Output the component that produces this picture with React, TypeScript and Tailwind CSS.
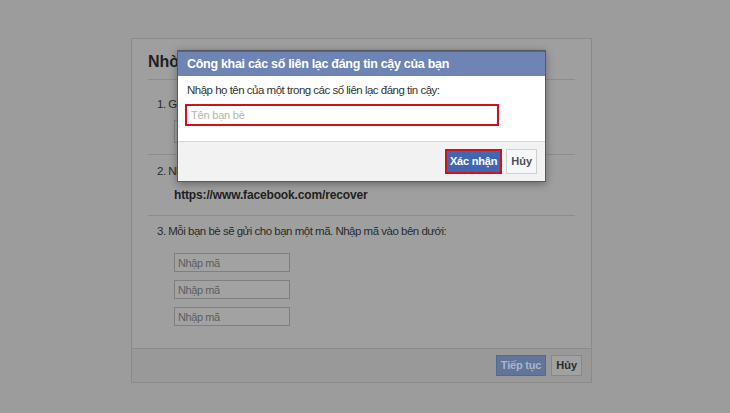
export default function App() {
  const codes = ["Nhập mã", "Nhập mã", "Nhập mã"];

  return (
    <div className="relative w-[730px] h-[413px] overflow-hidden bg-[#9c9c9c] pt-[38px] pl-[131px] font-['Liberation_Sans',Arial,sans-serif] text-[#2b2b2b]">
      {/* dimmed page card */}
      <div className="w-[461px] h-[345px] bg-[#9f9f9f] border border-[#8a8a8a] flex flex-col">
        <div className="flex-1 px-[16px]">
          <div className="h-[41px] flex items-center pt-[6px] border-b border-[#8c8c8c] text-[16px] font-bold text-[#1f1f1f]">
            Nhờ bạn bè giúp đỡ
          </div>
          <div className="h-[75px] border-b border-[#8c8c8c] pl-[9px] pt-[16px] text-[11.5px] tracking-[-0.5px]">
            <p>1. Gửi liên kết cho bạn bè của bạn</p>
            <div className="mt-[7px] ml-[17px] w-[150px] h-[23px] border border-[#858585] bg-[#a3a3a3]" />
          </div>
          <div className="h-[61px] border-b border-[#8c8c8c] pl-[9px] pt-[8px] text-[11.5px] tracking-[-0.5px]">
            <p>2. Nhờ họ truy cập vào liên kết sau:</p>
            <p className="mt-[6px] ml-[17px] text-[12px] tracking-[-0.15px] font-bold text-[#222]">https://www.facebook.com/recover</p>
          </div>
          <div className="pl-[9px] pt-[7px] text-[11.5px] tracking-[-0.5px]">
            <p>3. Mỗi bạn bè sẽ gửi cho bạn một mã. Nhập mã vào bên dưới:</p>
            <div className="mt-[13px] ml-[17px] flex flex-col gap-[8px]">
              {codes.map((c, i) => (
                <div
                  key={i}
                  className="w-[116px] h-[19px] border border-[#7f7f7f] bg-[#a2a2a2] px-[3px] flex items-center text-[11px] tracking-[-0.4px] text-[#5e5e5e]"
                >
                  {c}
                </div>
              ))}
            </div>
          </div>
        </div>
        <div className="h-[34px] border-t border-[#8a8a8a] bg-[#999999] flex items-center justify-end gap-[5px] pr-[9px]">
          <div className="h-[21px] px-[4px] flex items-center bg-[#617599] border border-[#56698c] text-[11px] tracking-[-0.2px] font-bold text-[#a9b5cc]">
            Tiếp tục
          </div>
          <div className="h-[21px] px-[4px] flex items-center bg-[#a1a1a1] border border-[#878787] text-[11px] font-bold text-[#2b2b2b]">
            Hủy
          </div>
        </div>
      </div>

      {/* modal dialog */}
      <div className="absolute left-[177px] top-[50px] w-[369px] border border-[#555a63] bg-white shadow-[0_2px_8px_rgba(0,0,0,0.35)]">
        <div className="h-[25px] bg-[#6d84b4] border-t border-[#4e6598] flex items-center pl-[9px] text-[12.5px] tracking-[-0.3px] font-bold text-white">
          Công khai các số liên lạc đáng tin cậy của bạn
        </div>
        <div className="h-[65px] px-[7px] pt-[6px]">
          <p className="text-[11.5px] tracking-[-0.5px] text-[#333] pl-[2px]">Nhập họ tên của một trong các số liên lạc đáng tin cậy:</p>
          <div className="mt-[5px] w-[314px] h-[22px] border-2 border-[#d0111b] flex items-center px-[4px] text-[11px] tracking-[-0.2px] text-[#b5b5b5]">
            Tên bạn bè
          </div>
        </div>
        <div className="h-[40px] bg-[#f2f2f2] border-t border-[#d6d6d6] flex items-center justify-end gap-[4px] pr-[8px]">
          <div className="h-[25px] border-2 border-[#d0111b] flex">
            <div className="px-[3px] flex items-center bg-[#4267b2] text-[11px] tracking-[-0.2px] font-bold text-white">
              Xác nhận
            </div>
          </div>
          <div className="h-[25px] px-[4px] flex items-center bg-[#f6f7f9] border border-[#ced0d4] text-[11px] font-bold text-[#4b4f56]">
            Hủy
          </div>
        </div>
      </div>
    </div>
  );
}
